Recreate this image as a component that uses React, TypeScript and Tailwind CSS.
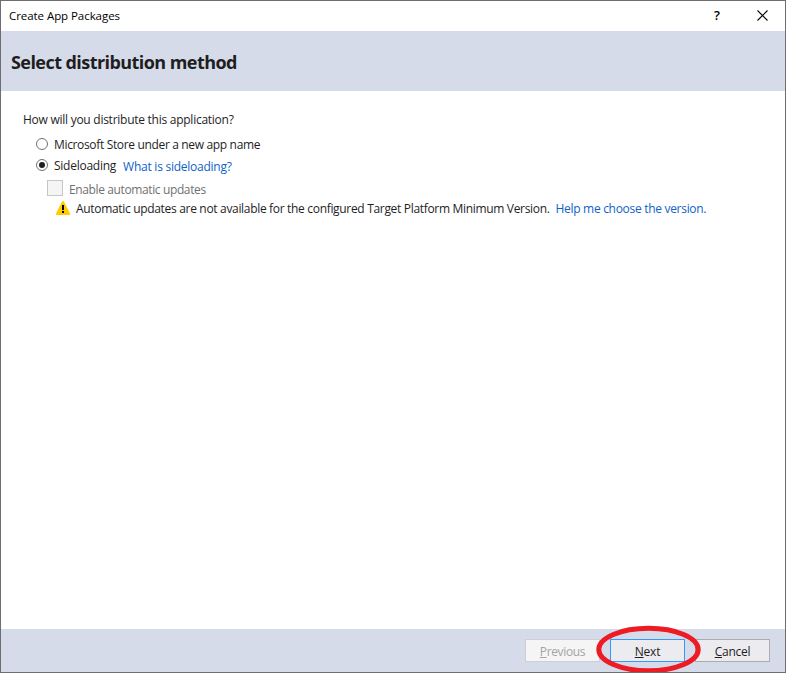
import React from "react";

function Radio({ checked = false }: { checked?: boolean }) {
  return (
    <span className="flex h-3 w-3 shrink-0 items-center justify-center rounded-full border border-[#717171] bg-white">
      {checked && <span className="h-1.5 w-1.5 rounded-full bg-[#1e1e1e]" />}
    </span>
  );
}

function WarningIcon() {
  return (
    <svg width="14" height="14" viewBox="0 0 14 14" className="shrink-0">
      <path d="M6.2 0.3h1.6L14 12.4V14H0V12.4z" fill="#ffcc00" />
      <path d="M6 4h2v5H6zM6 10h2v2H6z" fill="#000" />
    </svg>
  );
}

const buttonBase =
  "flex h-[23px] w-[75px] items-center justify-center border pt-[3px] text-[12px] leading-4";

export default function App() {
  return (
    <div className="relative flex h-[673px] w-[786px] flex-col overflow-hidden border border-[#6e6e70] bg-white font-['Open_Sans','Noto_Sans',sans-serif] text-[12px] leading-4 whitespace-nowrap text-[#1e1e1e]">
      <header className="flex h-[30px] shrink-0 items-center pl-2 text-black">
        <h1 className="text-[11.5px] tracking-[-0.06px]">Create App Packages</h1>
        <span className="ml-auto w-[10px] pb-0.5 text-center text-[13px] font-semibold">?</span>
        <svg width="11" height="11" viewBox="0 0 11 11" className="mr-[17px] mb-0.5 ml-[35px]">
          <path d="M0.5 0.5l10 10M10.5 0.5l-10 10" stroke="#000" strokeWidth="1.1" fill="none" />
        </svg>
      </header>

      <div className="flex h-[60px] shrink-0 items-center bg-[#d6dbe9] pt-0.5 pl-2.5">
        <h2 className="text-[18px] leading-6 font-bold tracking-[-0.56px]">Select distribution method</h2>
      </div>

      <main className="flex grow flex-col items-start pt-[21px] pl-[22px]">
        <p className="tracking-[-0.26px]">How will you distribute this application?</p>
        <label className="mt-2 ml-[13px] flex h-4 items-center gap-1.5">
          <Radio />
          <span className="pt-0.5 tracking-[-0.34px]">Microsoft Store under a new app name</span>
        </label>
        <div className="mt-[5px] ml-[13px] flex h-4 items-center">
          <label className="flex items-center gap-1.5">
            <Radio checked />
            <span className="pt-0.5 tracking-[-0.25px]">Sideloading</span>
          </label>
          <a className="ml-[7px] pt-1 tracking-[-0.25px] text-[#0e63c9]">What is sideloading?</a>
        </div>
        <label className="mt-[7px] ml-6 flex h-4 items-center gap-1.5">
          <span className="h-4 w-4 border border-[#c6c6c6] bg-[#f5f5f5]" />
          <span className="pt-[3px] tracking-[-0.38px] text-[#717171]">Enable automatic updates</span>
        </label>
        <div className="mt-1 ml-[33px] flex h-4 items-center">
          <WarningIcon />
          <span className="ml-1.5 pt-0.5 tracking-[-0.32px]">
            Automatic updates are not available for the configured Target Platform Minimum Version.
          </span>
          <a className="ml-1.5 pt-0.5 tracking-[-0.3px] text-[#0e63c9]">Help me choose the version.</a>
        </div>
      </main>

      <footer className="flex h-[43px] shrink-0 items-start justify-end gap-2.5 bg-[#d6dbe9] pt-2.5 pr-[15px]">
        <button className={`${buttonBase} border-[#ccceda] bg-[#f5f5f5] tracking-[-0.35px] text-[#a2a4a5]`}>
          <span><u>P</u>revious</span>
        </button>
        <button className={`${buttonBase} border-[#3399ff] bg-[#ececf0] tracking-[-0.2px]`}>
          <span><u>N</u>ext</span>
        </button>
        <button className={`${buttonBase} border-[#acacac] bg-[#ececf0] tracking-[-0.25px]`}>
          <span><u>C</u>ancel</span>
        </button>
      </footer>

      <svg width="108" height="50" viewBox="0 0 108 50" className="pointer-events-none absolute top-[623px] left-[593px]">
        <ellipse cx="54.5" cy="25.5" rx="49.7" ry="21.3" fill="none" stroke="#ed1c24" strokeWidth="5" />
      </svg>

      <span className="absolute top-[169px] -left-px h-px w-px bg-[#2d2a66]" />
      <span className="absolute top-[249px] -left-px h-px w-px bg-[#4d3a2a]" />
      <span className="absolute top-[251px] -left-px h-px w-px bg-[#4d3a2a]" />
      <span className="absolute top-[254px] -left-px h-px w-px bg-[#4d3a2a]" />
      <span className="absolute top-[278px] -left-px h-1 w-px bg-[#2c3350]" />
      <span className="absolute top-[282px] -left-px h-[5px] w-px bg-[#0b5c9c]" />
    </div>
  );
}
